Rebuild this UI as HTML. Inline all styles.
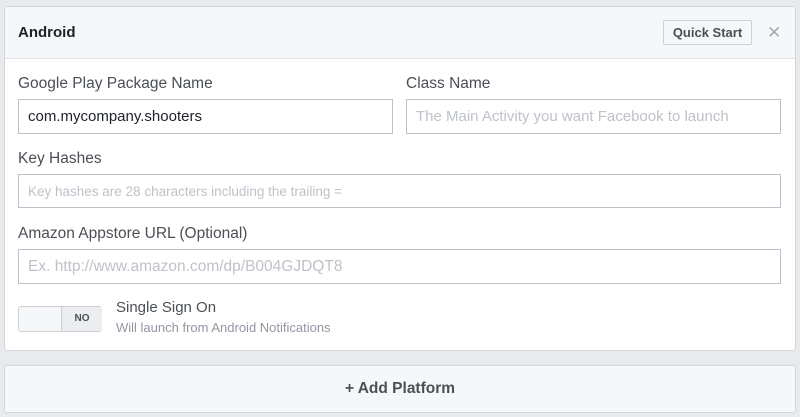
<!DOCTYPE html>
<html><head><style>
body{margin:0;width:800px;height:417px;background:#e9eaed;font-family:"Liberation Sans",Arial,sans-serif;position:relative;overflow:hidden;color:#1d2129}
.abs{position:absolute}
.panel{left:4px;top:6px;width:790px;height:343px;background:#fff;border:1px solid #d3d6db;border-radius:3px}
.hdr{left:5px;top:7px;width:790px;height:51px;background:#f6f7f9;border-bottom:1px solid #e5e5e5}
.lbl{font-size:15.5px;color:#4b4f56}
.inp{background:#fff;border:1px solid #bdc1c9;box-sizing:border-box;height:35px;font-size:15px;line-height:33px;padding-left:9px;color:#bec2c9;white-space:nowrap}
</style></head><body>
<div class="abs panel"></div>
<div class="abs hdr"></div>
<div class="abs" style="left:18px;top:24px;font-size:15px;font-weight:bold;color:#1d2129">Android</div>
<div class="abs" style="left:663px;top:20px;width:89px;height:25px;box-sizing:border-box;border:1px solid #ced0d4;background:#f6f7f9;border-radius:2px;font-size:13px;font-weight:bold;text-align:center;line-height:23px;color:#4b4f56">Quick Start</div>
<div class="abs" style="left:767px;top:23px;font-size:17px;color:#a6a9ae">✕</div>
<div class="abs lbl" style="left:18px;top:75px">Google Play Package Name</div>
<div class="abs lbl" style="left:406px;top:75px">Class Name</div>
<div class="abs inp" style="left:18px;top:99px;width:375px;color:#1d2129">com.mycompany.shooters</div>
<div class="abs inp" style="left:406px;top:99px;width:375px">The Main Activity you want Facebook to launch</div>
<div class="abs lbl" style="left:18px;top:150px">Key Hashes</div>
<div class="abs inp" style="left:18px;top:174px;width:763px;height:34px;font-size:13.5px">Key hashes are 28 characters including the trailing =</div>
<div class="abs lbl" style="left:18px;top:225px">Amazon Appstore URL (Optional)</div>
<div class="abs inp" style="left:18px;top:249px;width:763px;height:35px;font-size:15.5px">Ex. http://www.amazon.com/dp/B004GJDQT8</div>
<div class="abs" style="left:18px;top:306px;width:84px;height:26px;box-sizing:border-box;border:1px solid #ccd0d5;border-radius:3px;background:#f6f7f9"></div>
<div class="abs" style="left:61px;top:307px;width:40px;height:24px;background:#ebedf0;border-left:1px solid #ccd0d5;font-size:10px;font-weight:bold;text-align:center;line-height:24px;color:#4b4f56">NO</div>
<div class="abs" style="left:116px;top:299px;font-size:15px;color:#4b4f56">Single Sign On</div>
<div class="abs" style="left:116px;top:320px;font-size:13px;color:#9197a3">Will launch from Android Notifications</div>
<div class="abs" style="left:4px;top:365px;width:790px;height:46px;background:#f6f7f9;border:1px solid #d3d6db;border-radius:3px;text-align:center;line-height:46px;font-size:15.5px;font-weight:bold;color:#4b4f56">+ Add Platform</div>
</body></html>
